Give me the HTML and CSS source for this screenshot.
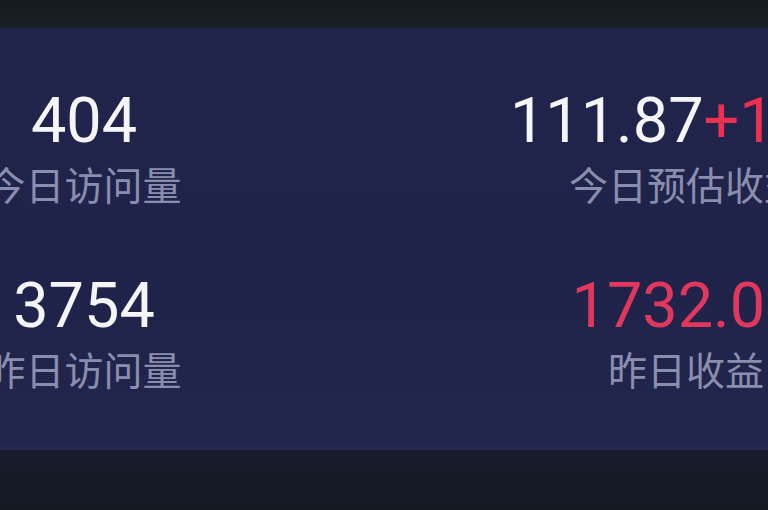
FILE: index.html
```html
<!DOCTYPE html>
<html lang="zh-CN">
<head>
<meta charset="utf-8">
<title>数据概览</title>
<link rel="stylesheet" href="styles.css">
</head>
<body>
<div class="screen">
  <div class="band-top"></div>
  <section class="panel">
    <div class="stat stat-left">
      <div class="value">404</div>
      <div class="label">今日访问量</div>
    </div>
    <div class="stat stat-right">
      <div class="value">111.87<span class="up">+1.56</span></div>
      <div class="label">今日预估收益</div>
    </div>
    <div class="stat stat-left">
      <div class="value">3754</div>
      <div class="label">昨日访问量</div>
    </div>
    <div class="stat stat-right">
      <div class="value red">1732.00</div>
      <div class="label">昨日收益</div>
    </div>
  </section>
  <div class="band-bottom"></div>
</div>
</body>
</html>
```

FILE: styles.css
```css
html, body {
  margin: 0;
  padding: 0;
  width: 768px;
  height: 510px;
  overflow: hidden;
  background: #161b26;
}

.screen {
  display: flex;
  flex-direction: column;
  width: 768px;
  height: 510px;
  overflow: hidden;
}

.band-top {
  height: 28px;
  flex: none;
  background: linear-gradient(#141a1e, #182024);
}

.panel {
  flex: none;
  height: 422px;
  box-sizing: border-box;
  padding: 61px 0 0 0;
  background: linear-gradient(#21254b 0%, #1f2349 60%, #22264d 97%, #262a52 100%);
  display: grid;
  grid-template-columns: 168px 200px;
  column-gap: 418px;
  row-gap: 71px;
  align-content: start;
}

.band-bottom {
  flex: 1;
  background: linear-gradient(#171b2b, #141a22);
}

.stat {
  display: flex;
  flex-direction: column;
  align-items: center;
  white-space: nowrap;
}

.value {
  font-family: Roboto, "Liberation Sans", sans-serif;
  font-size: 63px;
  line-height: 63px;
  height: 63px;
  color: #f5f5f8;
}

.value .up {
  color: #ee2f4f;
}

.value.red {
  color: #e2375d;
}

.label {
  margin-top: 12px;
  font-family: "Noto Sans CJK SC", "Noto Sans", sans-serif;
  font-size: 39px;
  line-height: 39px;
  height: 39px;
  color: #8a8eae;
}
```
